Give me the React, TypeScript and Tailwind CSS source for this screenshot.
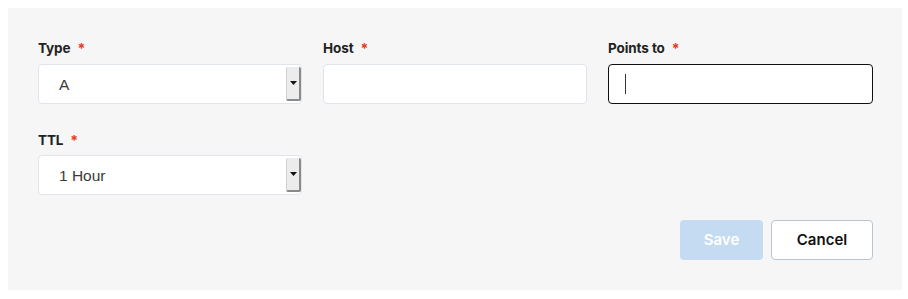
import React from "react";

function Label({ text }: { text: string }) {
  return (
    <div className="flex items-center h-[20px] text-[13.5px] font-bold text-[#222] tracking-[-0.1px]">
      <span>{text}</span>
      <span className="ml-[7px] text-[#e53a23] text-[14px]">*</span>
    </div>
  );
}

function Select({ value }: { value: string }) {
  return (
    <div className="flex h-[40px] w-full rounded-[4px] border border-[#dfe5ea] bg-white">
      <div className="flex-1 flex items-center pl-[20px] pt-[2px] text-[15.5px] text-[#3a3a3a]" style={{ fontFamily: "'Liberation Sans', Arial, sans-serif" }}>{value}</div>
      <div className="my-[2px] w-[15px] bg-[#ececec] border-r-2 border-b-2 border-[#8a8a8a] border-l border-l-[#d0d0d0] rounded-[2px] flex items-center justify-center">
        <svg width="7" height="4" viewBox="0 0 7 4">
          <path d="M0 0 L7 0 L3.5 4 Z" fill="#111" />
        </svg>
      </div>
    </div>
  );
}

export default function App() {
  return (
    <div className="w-[908px] h-[299px] bg-white pt-[8px]" style={{ fontFamily: "Inter, 'Noto Sans', sans-serif" }}>
      <div className="ml-[8px] w-[894px] h-[282px] bg-[#f5f6f5] px-[30px] pt-[30px]">
        <div className="grid grid-cols-3 gap-x-[21px]">
          <div className="flex flex-col">
            <Label text="Type" />
            <div className="mt-[6px]"><Select value="A" /></div>
          </div>
          <div className="flex flex-col">
            <Label text="Host" />
            <div className="mt-[6px] h-[40px] rounded-[4px] border border-[#dfe5ea] bg-white" />
          </div>
          <div className="flex flex-col">
            <Label text="Points to" />
            <div className="mt-[6px] h-[40px] w-[265px] rounded-[4px] border border-[#111] bg-white flex items-center pl-[16px]">
              <div className="w-px h-[20px] bg-[#333]" />
            </div>
          </div>
        </div>
        <div className="grid grid-cols-3 gap-x-[21px] mt-[26px]">
          <div className="flex flex-col">
            <Label text="TTL" />
            <div className="mt-[5px]"><Select value="1 Hour" /></div>
          </div>
        </div>
        <div className="flex justify-end gap-[8px] mt-[25px] -mr-px">
          <button className="w-[83px] h-[40px] rounded-[4px] bg-[#c4dbf1] text-white text-[15px] font-semibold">Save</button>
          <button className="w-[102px] h-[40px] rounded-[4px] bg-white border border-[#b9c5d1] text-[#111] text-[15px] font-semibold">Cancel</button>
        </div>
      </div>
    </div>
  );
}
